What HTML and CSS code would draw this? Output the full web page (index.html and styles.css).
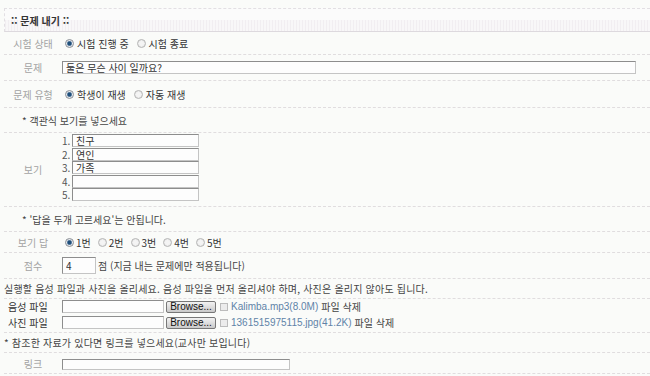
FILE: index.html
```html
<!DOCTYPE html>
<html lang="ko">

<head>
    <meta charset="UTF-8">
    <title>문제 내기</title>
    <link rel="stylesheet" href="styles.css">
</head>

<body>
    <div class="head">:: 문제 내기 ::</div>

    <div class="row h23">
        <div class="lbl">시험 상태</div>
        <div class="val">
            <label class="opt"><input type="radio" name="state" checked> 시험 진행 중</label>
            <label class="opt"><input type="radio" name="state"> 시험 종료</label>
        </div>
    </div>

    <div class="row h26">
        <div class="lbl">문제</div>
        <div class="val"><input type="text" class="txt question" value="둘은 무슨 사이 일까요?"></div>
    </div>

    <div class="row h27">
        <div class="lbl">문제 유형</div>
        <div class="val">
            <label class="opt"><input type="radio" name="kind" checked> 학생이 재생</label>
            <label class="opt"><input type="radio" name="kind"> 자동 재생</label>
        </div>
    </div>

    <div class="row h25 note">* 객관식 보기를 넣으세요</div>

    <div class="row h74">
        <div class="lbl">보기</div>
        <ol class="choices">
            <li><span>1.</span><input type="text" class="txt choice" value="친구"></li>
            <li><span>2.</span><input type="text" class="txt choice" value="연인"></li>
            <li><span>3.</span><input type="text" class="txt choice" value="가족"></li>
            <li><span>4.</span><input type="text" class="txt choice"></li>
            <li><span>5.</span><input type="text" class="txt choice"></li>
        </ol>
    </div>

    <div class="row h25 note">* '답을 두개 고르세요'는 안됩니다.</div>

    <div class="row h21">
        <div class="lbl">보기 답</div>
        <div class="val answers">
            <label class="opt"><input type="radio" name="ans" checked>1번</label>
            <label class="opt"><input type="radio" name="ans">2번</label>
            <label class="opt"><input type="radio" name="ans">3번</label>
            <label class="opt"><input type="radio" name="ans">4번</label>
            <label class="opt"><input type="radio" name="ans">5번</label>
        </div>
    </div>

    <div class="row h26">
        <div class="lbl">점수</div>
        <div class="val"><input type="text" class="txt score" value="4"> 점 (지금 내는 문제에만 적용됩니다)</div>
    </div>

    <div class="row h20 plain">실행할 음성 파일과 사진을 올리세요. 음성 파일을 먼저 올리셔야 하며, 사진은 올리지 않아도 됩니다.</div>

    <div class="row h34 files">
        <div class="file">
            <div class="flbl">음성 파일</div>
            <input type="text" class="txt path">
            <button class="browse">Browse...</button>
            <input type="checkbox" class="chk">
            <span class="fname">Kalimba.mp3(8.0M)</span> 파일 삭제
        </div>
        <div class="file">
            <div class="flbl">사진 파일</div>
            <input type="text" class="txt path">
            <button class="browse">Browse...</button>
            <input type="checkbox" class="chk">
            <span class="fname">1361515975115.jpg(41.2K)</span> 파일 삭제
        </div>
    </div>

    <div class="row h20 plain">* 참조한 자료가 있다면 링크를 넣으세요(교사만 보입니다)</div>

    <div class="row h21">
        <div class="lbl">링크</div>
        <div class="val"><input type="text" class="txt link"></div>
    </div>
</body>

</html>
```

FILE: styles.css
```css
* {
    box-sizing: border-box;
    margin: 0;
    padding: 0;
}

html,
body {
    width: 100%;
    height: 100%;
}

body {
    padding: 8px 0 0 4px;
    background: #fafbf9;
    color: #444;
    font-family: "Noto Sans CJK KR", "Liberation Sans", sans-serif;
    font-size: 10px;
    overflow: hidden;
}

.head {
    height: 24px;
    padding-left: 6px;
    display: flex;
    align-items: center;
    font-weight: bold;
    color: #333;
    border-top: 1px dashed #e2dfe3;
    border-bottom: 1px solid #ddd9de;
    border-left: 1px dashed #e2dfe3;
    background:
        repeating-linear-gradient(90deg, #f1eef1 0 1px, #f8f7f8 1px 3px) bottom / 100% 11px no-repeat,
        #fbfbfb;
}

.row {
    display: flex;
    align-items: center;
    border-bottom: 1px dashed #e0dddf;
}

.h20 { height: 20px; }
.h21 { height: 21px; }
.h23 { height: 23px; }
.h25 { height: 25px; }
.h26 { height: 26px; }
.h27 { height: 27px; }
.h34 { height: 34px; }
.h74 { height: 74px; }

.lbl {
    width: 58px;
    text-align: center;
    color: #a3a3a3;
}

.val {
    display: flex;
    align-items: center;
}

.note {
    padding-left: 18px;
}

.plain {
    letter-spacing: 0.2px;
}

.opt {
    display: flex;
    align-items: center;
    margin-right: 5px;
    color: #333;
}

.answers .opt {
    margin-right: 4px;
}

input[type="radio"] {
    appearance: none;
    width: 9px;
    height: 9px;
    margin: 0 3px 0 3px;
    border: 1px solid #b5b5b5;
    border-radius: 50%;
    background: radial-gradient(circle, #f4f4f4 0 40%, #dcdcdc 100%);
}

.answers input[type="radio"] {
    margin: 0 2px 0 3px;
}

input[type="radio"]:checked {
    border-color: #8a8f96;
    background: radial-gradient(circle, #1f4f7a 0 32%, #6c8cab 45%, #e6e9ec 60%);
}

.txt {
    height: 13px;
    border: 1px solid #c4c4c4;
    border-top-color: #8d8d8d;
    border-left-color: #8d8d8d;
    background: #fdfdfd;
    font: 10px/11px "Noto Sans CJK KR", sans-serif;
    color: #333;
    padding: 0 3px;
    outline: none;
}

.question {
    width: 574px;
}

.choices {
    list-style: none;
    align-self: flex-start;
    margin-top: 1px;
    display: grid;
    grid-auto-rows: 13.5px;
}

.choices li {
    display: flex;
    align-items: flex-start;
}

.choices span {
    width: 10px;
    color: #555;
    line-height: 13px;
}

.choice {
    width: 127px;
    height: 13px;
}

.score {
    width: 34px;
    height: 17px;
    margin-right: 2px;
}

.files {
    flex-direction: column;
    align-items: stretch;
    justify-content: center;
    gap: 1px;
    padding-bottom: 2px;
}

.file {
    display: flex;
    align-items: center;
    color: #444;
}

.flbl {
    width: 58px;
    padding-left: 4px;
    color: #333;
}

.path {
    width: 102px;
}

.browse {
    width: 50px;
    height: 12px;
    margin-left: 2px;
    border: 1px solid #777;
    border-radius: 2px;
    background: linear-gradient(#f2f2f2, #c9c9c9);
    font: 10px "Liberation Sans", sans-serif;
    color: #111;
    line-height: 10px;
}

.chk {
    appearance: none;
    width: 8px;
    height: 8px;
    margin: 0 3px 0 4px;
    border: 1px solid #bcbcbc;
    background: #ececec;
}

.fname {
    font-family: "Liberation Sans", sans-serif;
    color: #5f83a8;
    margin-right: 3px;
}

.link {
    width: 228px;
    height: 11px;
    margin-top: 2px;
}
```
